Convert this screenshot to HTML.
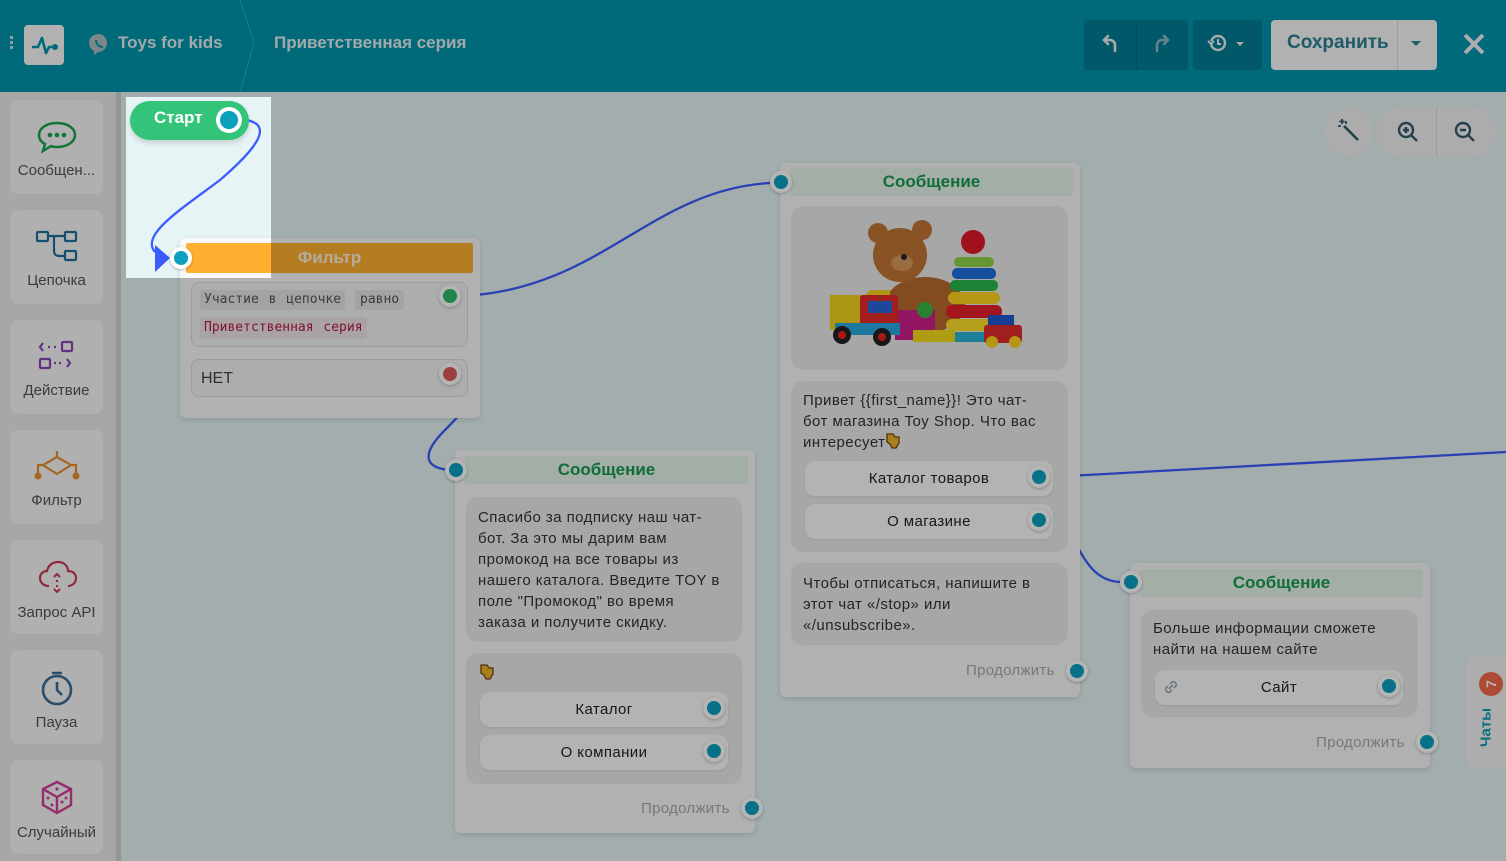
<!DOCTYPE html>
<html><head><meta charset="utf-8"><style>
*{box-sizing:border-box;margin:0;padding:0}
body{width:1506px;height:861px;overflow:hidden;position:relative;background:#e6f4f5;font-family:"Liberation Sans",sans-serif;color:#333}
.abs{position:absolute}
#hdr{left:0;top:0;width:1506px;height:92px;background:#0095ad}
#side{left:0;top:92px;width:116px;height:769px;background:#ebebeb}
#sb{left:116px;top:92px;width:5px;height:769px;background:#d2d2d2}
.it{position:absolute;left:10px;width:93px;height:94px;background:#f8f8f8;border-radius:8px;text-align:center;font-size:15px;color:#555}
.it svg{display:block;margin:20px auto 8px}
.card{position:absolute;background:#fafafa;border-radius:6px;box-shadow:0 2px 6px rgba(0,0,0,.12)}
.gh{position:absolute;background:#e6f6ec;color:#179a4f;font-weight:bold;font-size:17px;text-align:center;line-height:28px}
.blk{position:absolute;background:#ebebeb;border-radius:12px}
.txt{font-size:15px;line-height:21px;color:#333;letter-spacing:.45px}
.btn{position:absolute;background:#fcfcfc;border-radius:10px;text-align:center;font-size:15px;line-height:35px;color:#222;letter-spacing:.4px;box-shadow:0 1px 2px rgba(0,0,0,.08)}
.dot{position:absolute;width:22px;height:22px;border-radius:50%;background:#fff;box-shadow:0 1px 3px rgba(0,0,0,.25)}
.dot i{position:absolute;left:4px;top:4px;width:14px;height:14px;border-radius:50%;background:#0aa0be}
.cont{position:absolute;font-size:15px;color:#aaa;letter-spacing:.3px}
.hand{display:inline-block;vertical-align:-3px}
</style></head><body>

<div id="hdr" class="abs">
  <div class="abs" style="left:10px;top:36px;width:3px;height:3px;background:#cfdfe3;box-shadow:0 5px 0 #cfdfe3,0 10px 0 #cfdfe3"></div>
  <div class="abs" style="left:24px;top:25px;width:40px;height:40px;background:#fafafa;border-radius:4px">
    <svg width="40" height="40"><path d="M8 22 h6 l4 -9 l4 15 l3 -6 h6" fill="none" stroke="#0095ad" stroke-width="2.6" stroke-linejoin="round"/><circle cx="31" cy="22" r="3" fill="#0095ad"/></svg>
  </div>
  <svg class="abs" style="left:89px;top:33px" width="20" height="22"><path d="M10 1a9 9 0 0 1 8 9a9 9 0 0 1-9 9l-4 3v-4a9 9 0 0 1 5-17z" fill="#aebec4"/><path d="M7 7c0 4 3 7 7 7" stroke="#0095ad" stroke-width="2" fill="none"/></svg>
  <div class="abs" style="left:118px;top:33px;font-size:17px;font-weight:bold;color:#e6eef0">Toys for kids</div>
  <svg class="abs" style="left:236px;top:0" width="24" height="92"><path d="M4 0 L18 43 L4 92" stroke="#35adc2" stroke-width="1" fill="none"/></svg>
  <div class="abs" style="left:274px;top:33px;font-size:17px;font-weight:bold;color:#e6eef0">Приветственная серия</div>
  <div class="abs" style="left:1084px;top:20px;width:104px;height:50px;background:#007d93;border-radius:4px"></div>
  <div class="abs" style="left:1136px;top:20px;width:1px;height:50px;background:#006e82"></div>
  <svg class="abs" style="left:1100px;top:33px" width="20" height="22"><path d="M15 18v-6a5 5 0 0 0-5-5H4M8 3L4 7l4 4" fill="none" stroke="#f0f0f0" stroke-width="2.6" stroke-linecap="round"/></svg>
  <svg class="abs" style="left:1152px;top:33px" width="20" height="22"><path d="M5 18v-6a5 5 0 0 1 5-5h6M12 3l4 4-4 4" fill="none" stroke="#8fb9c3" stroke-width="2.6" stroke-linecap="round"/></svg>
  <div class="abs" style="left:1193px;top:20px;width:69px;height:50px;background:#007d93;border-radius:4px"></div>
  <svg class="abs" style="left:1207px;top:33px" width="44" height="22"><circle cx="11" cy="10" r="7" fill="none" stroke="#f0f0f0" stroke-width="2.4"/><path d="M11 6v5h3" stroke="#f0f0f0" stroke-width="2" fill="none"/><path d="M1 8l3 3 3-3" fill="#0095ad" stroke="#f0f0f0" stroke-width="2"/><path d="M29 9h8l-4 4z" fill="#f0f0f0"/></svg>
  <div class="abs" style="left:1271px;top:20px;width:166px;height:50px;background:#fafafa;border-radius:4px"></div>
  <div class="abs" style="left:1397px;top:20px;width:1px;height:50px;background:#ddd"></div>
  <div class="abs" style="left:1287px;top:32px;font-size:19px;font-weight:bold;color:#2b8193">Сохранить</div>
  <svg class="abs" style="left:1410px;top:40px" width="12" height="8"><path d="M1 1h10l-5 5z" fill="#2b8193"/></svg>
  <svg class="abs" style="left:1462px;top:32px" width="24" height="24"><path d="M3 3L21 21M21 3L3 21" stroke="#f2f2f2" stroke-width="4"/></svg>
</div>

<div id="side" class="abs">
  <div class="it" style="top:8px"><svg width="44" height="34"><path d="M22 3c10 0 18 5 18 12s-8 12-18 12c-2 0-4 0-6-1l-8 5 2-7c-4-2-6-5-6-9 0-7 8-12 18-12z" fill="none" stroke="#18a54f" stroke-width="2.5"/><circle cx="15" cy="15" r="2.3" fill="#18a54f"/><circle cx="22" cy="15" r="2.3" fill="#18a54f"/><circle cx="29" cy="15" r="2.3" fill="#18a54f"/></svg>Сообщен...</div>
  <div class="it" style="top:118px"><svg width="44" height="34"><rect x="2" y="2" width="11" height="9" rx="1" fill="none" stroke="#1f6f9e" stroke-width="2.2"/><rect x="30" y="2" width="11" height="9" rx="1" fill="none" stroke="#1f6f9e" stroke-width="2.2"/><rect x="30" y="21" width="11" height="9" rx="1" fill="none" stroke="#1f6f9e" stroke-width="2.2"/><path d="M13 6h17M19 6v15c0 3 2 5 5 5h6" fill="none" stroke="#1f6f9e" stroke-width="2.2"/></svg>Цепочка</div>
  <div class="it" style="top:228px"><svg width="44" height="34"><path d="M8 3l-3 4 3 4M32 19l3 4-3 4" fill="none" stroke="#8a45b8" stroke-width="2.2"/><rect x="27" y="2" width="10" height="9" rx="1" fill="none" stroke="#8a45b8" stroke-width="2.2"/><rect x="5" y="19" width="10" height="9" rx="1" fill="none" stroke="#8a45b8" stroke-width="2.2"/><path d="M13 7h2M19 7h2M19 23h2M24 23h2" stroke="#8a45b8" stroke-width="2.2"/></svg>Действие</div>
  <div class="it" style="top:338px"><svg width="50" height="34"><path d="M25 1v6M25 7l-14 8 14 9 14-9zM11 15H6v10M39 15h5v10" fill="none" stroke="#e8902e" stroke-width="2.2"/><circle cx="6" cy="26" r="3.5" fill="#e8902e"/><circle cx="44" cy="26" r="3.5" fill="#e8902e"/></svg>Фильтр</div>
  <div class="it" style="top:448px"><svg width="44" height="36"><path d="M14 26c-5 0-9-3-9-8 0-4 3-7 7-7 1-5 5-9 11-9 6 0 10 4 10 9 5 0 8 3 8 7 0 5-4 8-8 8" fill="none" stroke="#cc3b52" stroke-width="2.2"/><path d="M19 17l3-3 3 3M19 29l3 3 3-3M22 20v2M22 25v2" fill="none" stroke="#cc3b52" stroke-width="2"/></svg>Запрос API</div>
  <div class="it" style="top:558px"><svg width="44" height="36"><circle cx="22" cy="20" r="14" fill="none" stroke="#3a6d96" stroke-width="2.6"/><path d="M17 3h10M22 12v8l5 5" fill="none" stroke="#3a6d96" stroke-width="2.6"/></svg>Пауза</div>
  <div class="it" style="top:668px"><svg width="44" height="36"><path d="M22 2l14 7v16l-14 8-14-8V9zM8 9l14 8 14-8M22 17v16" fill="none" stroke="#d23e9c" stroke-width="2.4"/><circle cx="22" cy="9" r="1.6" fill="#d23e9c"/><circle cx="13" cy="18" r="1.5" fill="#d23e9c"/><circle cx="17" cy="25" r="1.5" fill="#d23e9c"/><circle cx="27" cy="22" r="1.5" fill="#d23e9c"/><circle cx="31" cy="18" r="1.5" fill="#d23e9c"/></svg>Случайный</div>
</div>
<div id="sb" class="abs"></div>

<svg class="abs" style="left:0;top:0" width="1506" height="861">
  <g fill="none" stroke="#3a5cff" stroke-width="2.3">
    <path d="M246 120 C 275 125, 255 150, 220 180 C 180 210, 140 235, 155 252"/>
    <path d="M462 296 C 600 290, 650 190, 770 183"/>
    <path d="M462 376 C 490 380, 475 400, 445 430 C 420 455, 425 468, 450 470"/>
    <path d="M1050 477 C 1200 470, 1350 460, 1506 452"/>
    <path d="M1050 520 C 1080 525, 1078 580, 1120 582"/>
  </g>
  <path d="M155 245 L170 258 L155 272 Z" fill="#3a5cff"/>
</svg>

<div class="abs" style="left:130px;top:101px;width:119px;height:39px;border-radius:20px;background:#33c47a;box-shadow:0 3px 6px rgba(0,0,0,.15)"></div>
<div class="abs" style="left:154px;top:108px;color:#fff;font-weight:bold;font-size:17px">Старт</div>
<div class="abs" style="left:216px;top:107px;width:26px;height:26px;border-radius:50%;background:#fff"><i style="position:absolute;left:4px;top:4px;width:18px;height:18px;border-radius:50%;background:#0aa0be"></i></div>

<div class="card" style="left:180px;top:238px;width:300px;height:180px"></div>
<div class="abs" style="left:186px;top:243px;width:287px;height:30px;background:#ffb030;border-radius:2px;color:#fff3dd;font-weight:bold;font-size:17px;text-align:center;line-height:30px">Фильтр</div>
<div class="abs" style="left:191px;top:282px;width:277px;height:65px;border:1px solid #dcdcdc;border-radius:8px;background:#f4f4f4"></div>
<div class="abs" style="left:200px;top:290px;padding:0 4px;height:20px;line-height:20px;background:#e6e6e6;border-radius:3px;font-family:'DejaVu Sans Mono','Liberation Mono',monospace;font-size:13px;color:#555;word-spacing:2px">Участие в цепочке</div>
<div class="abs" style="left:355px;top:290px;padding:0 5px;height:20px;line-height:20px;background:#e6e6e6;border-radius:3px;font-family:'DejaVu Sans Mono','Liberation Mono',monospace;font-size:13px;color:#555">равно</div>
<div class="abs" style="left:200px;top:317px;padding:0 4px;height:22px;line-height:22px;background:#f0e6ea;border-radius:3px;font-family:'DejaVu Sans Mono','Liberation Mono',monospace;font-size:13px;color:#b81b3f;word-spacing:2px">Приветственная серия</div>
<div class="abs" style="left:191px;top:359px;width:277px;height:38px;border:1px solid #dcdcdc;border-radius:8px;background:#f4f4f4;font-size:16px;line-height:38px;padding-left:9px;color:#444">НЕТ</div>
<div class="dot" style="left:439px;top:285px"><i style="background:#2cbb6a"></i></div>
<div class="dot" style="left:439px;top:363px"><i style="background:#e05a5a"></i></div>
<div class="dot" style="left:170px;top:247px"><i></i></div>

<div class="card" style="left:455px;top:450px;width:300px;height:383px"></div>
<div class="gh" style="left:465px;top:456px;width:283px">Сообщение</div>
<div class="blk txt" style="left:466px;top:497px;width:276px;height:145px;padding:10px 22px 10px 12px">Спасибо за подписку наш чат-бот. За это мы дарим вам промокод на все товары из нашего каталога. Введите TOY в поле "Промокод" во время заказа и получите скидку.</div>
<div class="blk" style="left:466px;top:653px;width:276px;height:131px"><svg class="abs" style="left:13px;top:10px" width="16" height="18"><path d="M2 2h6l2 3h4v6l-3 5h-4l-2-4-3-2z" fill="#f0b42a" stroke="#6a4a10" stroke-width="1.3"/></svg></div>
<div class="btn" style="left:480px;top:692px;width:248px">Каталог</div>
<div class="btn" style="left:480px;top:735px;width:248px">О компании</div>
<div class="dot" style="left:703px;top:697px"><i></i></div>
<div class="dot" style="left:703px;top:740px"><i></i></div>
<div class="cont" style="left:641px;top:800px">Продолжить</div>
<div class="dot" style="left:741px;top:797px"><i></i></div>
<div class="dot" style="left:445px;top:459px"><i></i></div>

<div class="card" style="left:780px;top:163px;width:300px;height:534px"></div>
<div class="gh" style="left:790px;top:168px;width:283px">Сообщение</div>
<div class="blk" style="left:791px;top:206px;width:277px;height:164px"></div>
<svg class="abs" style="left:820px;top:215px" width="215" height="135">
  <ellipse cx="105" cy="90" rx="40" ry="28" fill="#b86b2e"/>
  <circle cx="80" cy="40" r="27" fill="#c37536"/>
  <circle cx="58" cy="18" r="10" fill="#c37536"/><circle cx="102" cy="15" r="10" fill="#c37536"/>
  <ellipse cx="82" cy="48" rx="11" ry="8" fill="#d9995c"/><circle cx="84" cy="42" r="3" fill="#222"/>
  <path d="M75 95 h40 v30 h-40z" fill="#d0208a"/>
  <circle cx="153" cy="27" r="12" fill="#e2182a"/>
  <rect x="134" y="42" width="40" height="10" rx="5" fill="#8fd44a"/>
  <rect x="132" y="53" width="44" height="11" rx="5" fill="#1f6fe0"/>
  <rect x="130" y="65" width="48" height="11" rx="5" fill="#29b84a"/>
  <rect x="128" y="77" width="52" height="12" rx="6" fill="#ffd51e"/>
  <rect x="126" y="90" width="56" height="13" rx="6" fill="#e8202a"/>
  <rect x="126" y="104" width="56" height="12" rx="6" fill="#ffe02a"/>
  <rect x="128" y="117" width="52" height="10" rx="5" fill="#2ab4d8"/>
  <path d="M10 80 h35 l5 -5 h20 v40 h-60z" fill="#f2d21c"/>
  <rect x="40" y="80" width="38" height="30" rx="3" fill="#e52b2b"/>
  <rect x="48" y="86" width="24" height="12" fill="#2a66d8"/>
  <rect x="15" y="108" width="65" height="12" fill="#2aa8e0"/>
  <circle cx="22" cy="120" r="9" fill="#222"/><circle cx="22" cy="120" r="4" fill="#e22"/>
  <circle cx="62" cy="122" r="9" fill="#222"/><circle cx="62" cy="122" r="4" fill="#e22"/>
  <rect x="93" y="115" width="42" height="12" fill="#f5dc1a"/>
  <circle cx="105" cy="95" r="8" fill="#3ab848"/>
  <rect x="168" y="100" width="26" height="10" fill="#1f55d0"/>
  <rect x="164" y="110" width="38" height="18" rx="3" fill="#e22b2b"/>
  <circle cx="172" cy="127" r="6" fill="#ffd51e"/><circle cx="195" cy="127" r="6" fill="#ffd51e"/>
</svg>
<div class="blk txt" style="left:791px;top:381px;width:277px;height:171px;padding:9px 28px 9px 12px">Привет {{first_name}}! Это чат-бот магазина Toy Shop. Что вас интересует<svg class="hand" width="16" height="18"><path d="M2 2h6l2 3h4v6l-3 5h-4l-2-4-3-2z" fill="#f0b42a" stroke="#6a4a10" stroke-width="1.3"/></svg></div>
<div class="btn" style="left:805px;top:461px;width:248px">Каталог товаров</div>
<div class="btn" style="left:805px;top:504px;width:248px">О магазине</div>
<div class="dot" style="left:1028px;top:466px"><i></i></div>
<div class="dot" style="left:1028px;top:509px"><i></i></div>
<div class="blk txt" style="left:791px;top:563px;width:277px;height:82px;padding:10px 12px">Чтобы отписаться, напишите в этот чат «/stop» или «/unsubscribe».</div>
<div class="cont" style="left:966px;top:662px">Продолжить</div>
<div class="dot" style="left:1066px;top:660px"><i></i></div>
<div class="dot" style="left:770px;top:171px"><i></i></div>

<div class="card" style="left:1130px;top:563px;width:300px;height:205px"></div>
<div class="gh" style="left:1140px;top:569px;width:283px">Сообщение</div>
<div class="blk txt" style="left:1141px;top:610px;width:277px;height:107px;padding:8px 12px">Больше информации сможете найти на нашем сайте</div>
<div class="btn" style="left:1155px;top:670px;width:248px">Сайт</div>
<svg class="abs" style="left:1162px;top:678px" width="18" height="18"><path d="M7 11l4-4M6 8l-2 2a3 3 0 0 0 4 4l2-2M12 10l2-2a3 3 0 0 0-4-4l-2 2" fill="none" stroke="#9ab" stroke-width="1.6"/></svg>
<div class="dot" style="left:1378px;top:675px"><i></i></div>
<div class="cont" style="left:1316px;top:734px">Продолжить</div>
<div class="dot" style="left:1416px;top:731px"><i></i></div>
<div class="dot" style="left:1120px;top:571px"><i></i></div>

<div class="abs" style="left:1466px;top:657px;width:46px;height:111px;background:#f4f4f4;border-radius:8px 0 0 8px"></div>
<div class="abs" style="left:1479px;top:672px;width:24px;height:24px;border-radius:50%;background:#f26b4a;color:#fff;font-weight:bold;font-size:14px;text-align:center;line-height:24px;transform:rotate(-90deg)">7</div>
<div class="abs" style="left:1464px;top:719px;width:44px;transform:rotate(-90deg);color:#139bb6;font-weight:bold;font-size:15px;text-align:center">Чаты</div>

<div class="abs" style="left:1324px;top:107px;width:49px;height:49px;border-radius:50%;background:#f2f2f2"></div>
<svg class="abs" style="left:1336px;top:118px" width="26" height="26"><path d="M8 8l14 14" stroke="#355a6c" stroke-width="2.6"/><path d="M6 1v5M3.5 3.5h5M2 8h3M10 3v3" stroke="#355a6c" stroke-width="1.8"/></svg>
<div class="abs" style="left:1377px;top:107px;width:119px;height:50px;border-radius:25px;background:#f2f2f2"></div>
<div class="abs" style="left:1436px;top:107px;width:1px;height:50px;background:#d8d8d8"></div>
<svg class="abs" style="left:1396px;top:120px" width="24" height="24"><circle cx="10" cy="10" r="7" fill="none" stroke="#355a6c" stroke-width="2.4"/><path d="M15 15l6 6M7 10h6M10 7v6" stroke="#355a6c" stroke-width="2.4"/></svg>
<svg class="abs" style="left:1453px;top:120px" width="24" height="24"><circle cx="10" cy="10" r="7" fill="none" stroke="#355a6c" stroke-width="2.4"/><path d="M15 15l6 6M7 10h6" stroke="#355a6c" stroke-width="2.4"/></svg>

<div class="abs" style="left:126px;top:97px;width:145px;height:181px;box-shadow:0 0 0 3000px rgba(0,0,0,.29);z-index:50;pointer-events:none"></div>
</body></html>
